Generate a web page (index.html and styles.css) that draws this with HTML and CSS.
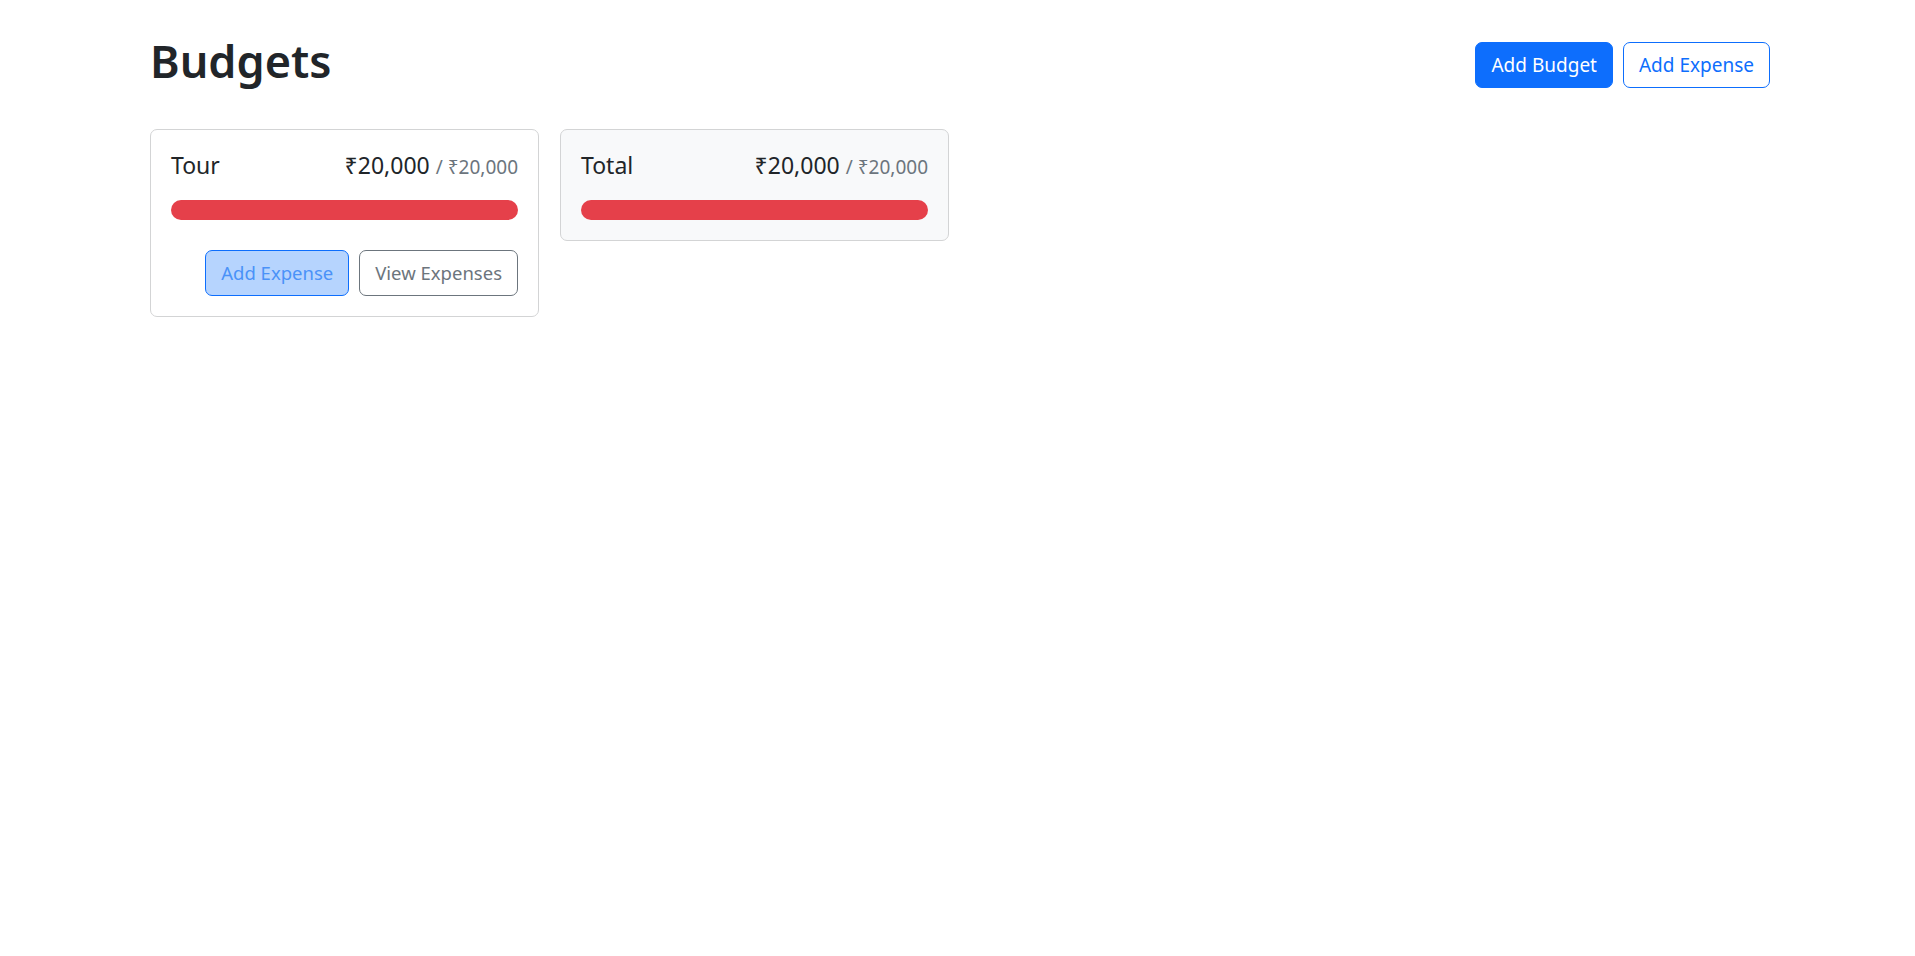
FILE: index.html
```html
<!DOCTYPE html>
<html>
<head>
    <title>Budgets</title>
    <link rel="stylesheet" href="styles.css">
</head>
<body>
    <div class="page">
        <div class="header">
            <h1>Budgets</h1>
            <div class="actions">
                <button class="btn btn-primary">Add Budget</button>
                <button class="btn btn-outline-primary">Add Expense</button>
            </div>
        </div>

        <div class="budget-grid">
            <!-- Budget card -->
            <div class="card">
                <div class="card-title">
                    <span>Tour</span>
                    <span class="amount">₹20,000 <span class="max">/ ₹20,000</span></span>
                </div>
                <div class="progress">
                    <div class="progress-bar" style="width: 100%;"></div>
                </div>
                <div class="card-actions">
                    <button class="btn btn-outline-primary active">Add Expense</button>
                    <button class="btn btn-outline-secondary">View Expenses</button>
                </div>
            </div>

            <!-- Total card -->
            <div class="card card-light">
                <div class="card-title">
                    <span>Total</span>
                    <span class="amount">₹20,000 <span class="max">/ ₹20,000</span></span>
                </div>
                <div class="progress no-margin">
                    <div class="progress-bar" style="width: 100%;"></div>
                </div>
            </div>
        </div>
    </div>
</body>
</html>
```

FILE: styles.css
```css
body {
    margin: 0;
    font-family: "Noto Sans", "Open Sans", sans-serif;
    color: #212529;
    background: #fff;
}

.page {
    padding: 0 145px 0 150px;
}

.header {
    display: flex;
    justify-content: space-between;
    align-items: flex-start;
    padding-top: 34px;
    margin-bottom: 41px;
}

h1 {
    margin: 0;
    font-size: 45px;
    line-height: 54px;
    font-weight: 600;
}

.actions {
    display: flex;
    gap: 10px;
    margin-top: 8px;
}

.btn {
    font-family: inherit;
    font-size: 19px;
    line-height: 30px;
    padding: 7px 15px;
    border: 1px solid transparent;
    border-radius: 7px;
    background: transparent;
    cursor: pointer;
}

.btn-primary {
    background: #0d6efd;
    border-color: #0d6efd;
    color: #fff;
}

.btn-outline-primary {
    border-color: #0d6efd;
    color: #0d6efd;
}

.btn-outline-primary.active {
    background: #b6d4fe;
    color: #4a92f8;
}

.btn-outline-secondary {
    border-color: #6c757d;
    color: #6c757d;
}

.card-actions .btn {
    font-size: 18.5px;
}

.budget-grid {
    display: flex;
    align-items: flex-start;
    gap: 21px;
}

.card {
    width: 389px;
    box-sizing: border-box;
    padding: 20px;
    border: 1px solid #d3d4d5;
    border-radius: 7px;
    background: #fff;
}

.card-light {
    background: #f8f9fa;
}

.card-title {
    display: flex;
    justify-content: space-between;
    align-items: baseline;
    height: 30px;
    font-size: 23px;
    line-height: 30px;
    margin-bottom: 20px;
}

.max {
    font-size: 19px;
    color: #6c757d;
}

.progress {
    height: 20px;
    border-radius: 10px;
    background: #e9ecef;
    overflow: hidden;
    margin-bottom: 30px;
}

.progress.no-margin {
    margin-bottom: 0;
}

.progress-bar {
    height: 100%;
    background: #e5404a;
}

.card-actions {
    display: flex;
    justify-content: flex-end;
    gap: 10px;
}
```
